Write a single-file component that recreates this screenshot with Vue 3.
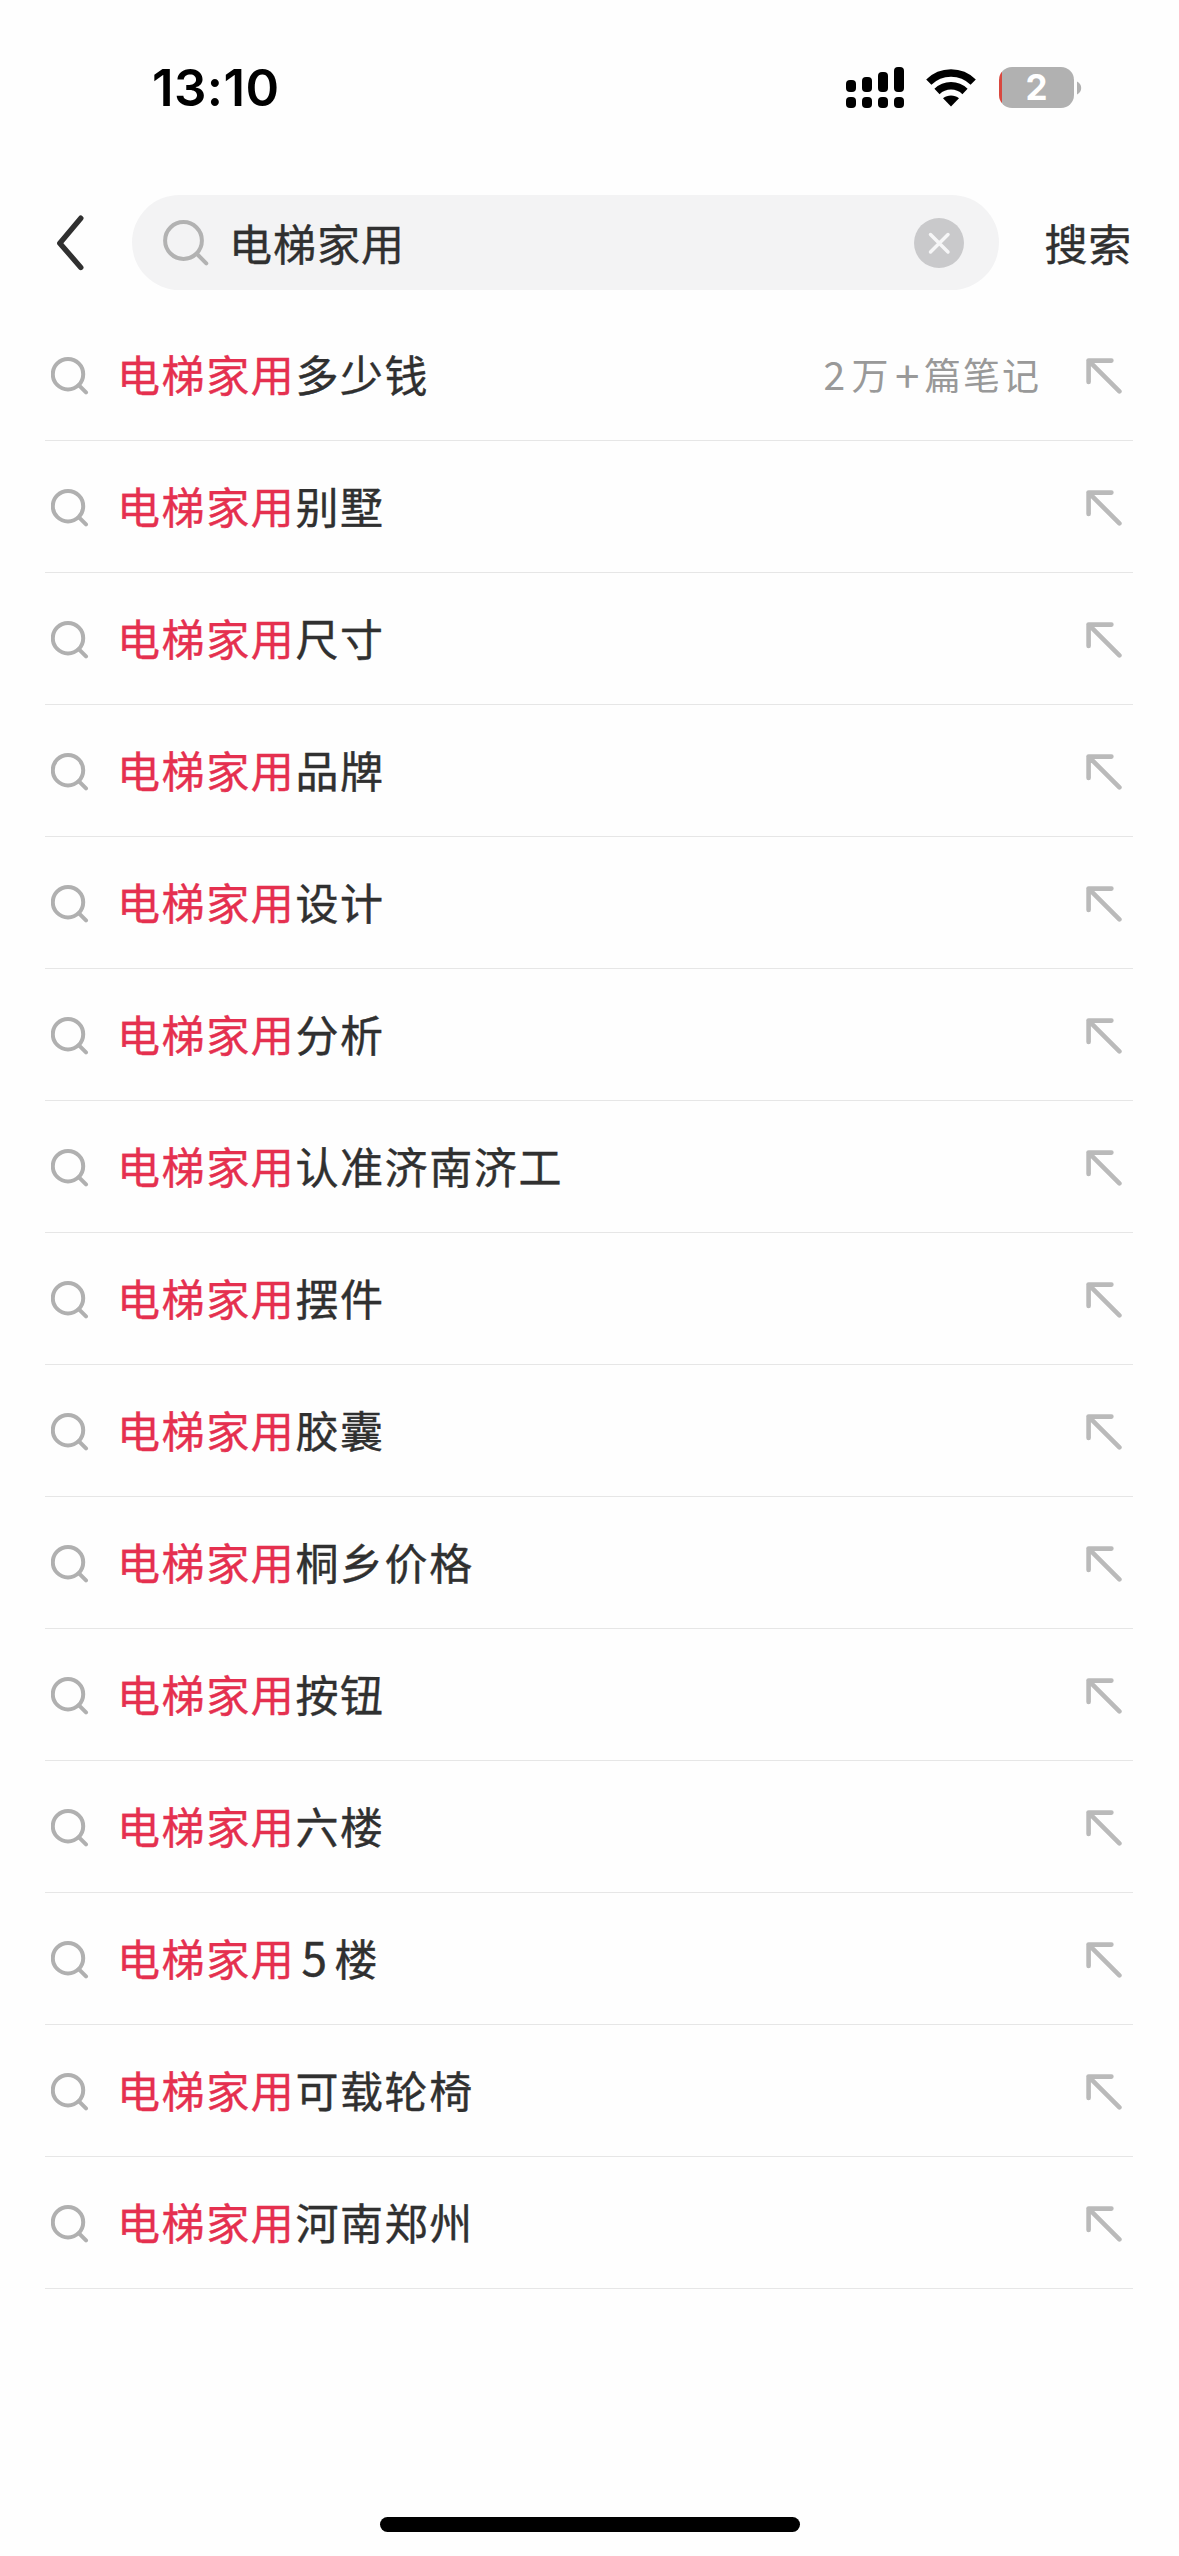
<script setup>
const keyword = '电梯家用'
const items = [
  { tail: '多少钱', counted: true },
  { tail: '别墅' },
  { tail: '尺寸' },
  { tail: '品牌' },
  { tail: '设计' },
  { tail: '分析' },
  { tail: '认准济南济工' },
  { tail: '摆件' },
  { tail: '胶囊' },
  { tail: '桐乡价格' },
  { tail: '按钮' },
  { tail: '六楼' },
  { digit: '5', tail: '楼' },
  { tail: '可载轮椅' },
  { tail: '河南郑州' },
]
</script>

<template>
  <div class="screen">
    <header class="status">
      <span class="time">13:10</span>
      <div class="indicators">
        <svg class="signal" width="58" height="41" viewBox="0 0 58 41">
          <rect x="0" y="13" width="10" height="12" rx="4" />
          <rect x="16" y="10" width="10" height="15" rx="4" />
          <rect x="32" y="5" width="10" height="20" rx="4" />
          <rect x="48" y="0" width="10" height="25" rx="4" />
          <rect v-for="x in [0, 16, 32, 48]" :key="x" :x="x" y="30" width="10" height="11" rx="4" />
        </svg>
        <svg class="wifi" width="50" height="38" viewBox="0 0 50 38">
          <path d="M2.8 13.2A31.5 31.5 0 0 1 47.2 13.2" />
          <path d="M11 22.5A20 20 0 0 1 39 22.5" />
          <path class="dot" d="M25 37.5L17 29.3C21.5 25.6 28.5 25.6 33 29.3Z" />
        </svg>
        <div class="battery"><span class="level">2</span></div>
        <svg class="cap" width="5" height="14" viewBox="0 0 5 14">
          <path d="M0 0.5C5.6 3 5.6 11 0 13.5Z" />
        </svg>
      </div>
    </header>

    <div class="search">
      <svg class="back" width="28" height="56" viewBox="0 0 28 56">
        <path d="M24.8 3.2L3.8 28.2L24.8 52.4" />
      </svg>
      <div class="field">
        <svg class="glass" width="46" height="46" viewBox="0 0 46 46">
          <circle cx="20.5" cy="20.5" r="18.4" />
          <path d="M34 34L43.3 43.3" />
        </svg>
        <span class="query">{{ keyword }}</span>
        <svg class="clear" width="50" height="50" viewBox="0 0 50 50">
          <circle cx="25" cy="25" r="25" />
          <path d="M16.5 16.5L34 34M34 16.5L16.5 34" />
        </svg>
      </div>
      <span class="submit">搜索</span>
    </div>

    <ul class="list">
      <li v-for="item in items" :key="item.tail" class="row">
        <svg class="lens" width="38" height="38" viewBox="0 0 38 38">
          <circle cx="17" cy="17.2" r="15.2" />
          <path d="M28 28.4L35 35.4" />
        </svg>
        <span class="label"><em>{{ keyword }}</em><span v-if="item.digit" class="digit">{{ item.digit }}</span>{{ item.tail }}</span>
        <span v-if="item.counted" class="count"><span class="num">2</span>万<span class="plus">+</span>篇笔记</span>
        <svg class="arrow" width="36" height="36" viewBox="0 0 36 36">
          <path d="M25.4 2.6H2.6V24M2.6 2.6L33.4 33.4" />
        </svg>
      </li>
    </ul>

    <footer class="home"><i></i></footer>
  </div>
</template>

<style>
body {
  margin: 0;
  background: #fefefe;
}
</style>

<style scoped>
.screen {
  box-sizing: border-box;
  display: flex;
  flex-direction: column;
  width: 1179px;
  height: 2556px;
  overflow: hidden;
  background: #fefefe;
  color: #303030;
  font-family: "Noto Sans CJK SC", sans-serif;
}
svg {
  display: block;
  flex: none;
  fill: none;
  stroke-linecap: round;
}
.status {
  box-sizing: border-box;
  display: flex;
  justify-content: space-between;
  align-items: center;
  height: 176px;
  padding: 0 97px 0 152px;
}
.time {
  color: #000;
  font: 600 51px/60px Inter, sans-serif;
  letter-spacing: 0.4px;
}
.indicators {
  display: flex;
  align-items: center;
  height: 41px;
  margin-bottom: 1px;
}
.signal {
  fill: #000;
}
.wifi {
  margin-left: 22px;
  stroke: #000;
  stroke-width: 7.4;
  stroke-linecap: butt;
}
.wifi .dot {
  fill: #000;
  stroke: none;
}
.battery {
  display: flex;
  align-items: center;
  justify-content: center;
  width: 75px;
  height: 41px;
  margin-left: 23px;
  border-radius: 13px;
  background: linear-gradient(90deg, #d9483f 3px, #b1b1b1 3px);
}
.level {
  color: #fff;
  font: 700 35px/41px Inter, sans-serif;
}
.cap {
  margin-left: 3px;
  fill: #b1b1b1;
}
.search {
  box-sizing: border-box;
  display: flex;
  align-items: center;
  height: 133px;
  padding: 0 47px 0 56px;
}
.search .back {
  stroke: #303030;
  stroke-width: 5.4;
  stroke-linejoin: round;
}
.field {
  box-sizing: border-box;
  display: flex;
  align-items: center;
  width: 867px;
  height: 95px;
  margin-left: 48px;
  padding: 0 35px 0 31px;
  border-radius: 48px;
  background: #f3f3f4;
}
.glass {
  stroke: #b2b2b2;
  stroke-width: 4;
}
.query {
  flex: 1;
  margin-left: 20px;
  padding-bottom: 2px;
  font-size: 43px;
  line-height: 60px;
  letter-spacing: 1px;
}
.query,
.submit,
.label {
  -webkit-text-stroke: 0.4px currentColor;
}
.clear {
  fill: #c9c9cb;
  stroke: #f6f6f7;
  stroke-width: 3.5;
}
.clear circle {
  stroke: none;
}
.submit {
  margin-left: auto;
  padding-bottom: 2px;
  font-size: 43px;
  line-height: 60px;
  letter-spacing: 0.8px;
}
.list {
  margin: 0;
  padding: 0 46px 0 45px;
  list-style: none;
}
.row {
  box-sizing: border-box;
  display: flex;
  align-items: center;
  height: 132px;
  padding: 2px 11px 0 6px;
  border-bottom: 1px solid #e6e6e6;
}
.lens {
  stroke: #b0b0b0;
  stroke-width: 4;
}
.label {
  flex: 1;
  margin-left: 28px;
  padding-bottom: 5px;
  font-size: 43px;
  line-height: 60px;
  letter-spacing: 1.6px;
  white-space: nowrap;
}
.label em {
  color: #e5304f;
  font-style: normal;
}
.digit {
  margin: 0 6px 0 6px;
  font-size: 46px;
  line-height: 1;
}
.count {
  margin-right: 45px;
  padding-bottom: 4px;
  color: #999;
  font-size: 37px;
  line-height: 54px;
  letter-spacing: 2px;
  white-space: nowrap;
}
.num,
.plus {
  display: inline-block;
  line-height: 1;
  letter-spacing: 0;
}
.num {
  width: 28px;
  font-size: 39px;
}
.plus {
  position: relative;
  top: 3px;
  width: 33.5px;
  font-size: 44px;
  text-align: center;
}
.arrow {
  margin-top: 1px;
  stroke: #bababa;
  stroke-width: 4.6;
  stroke-linejoin: round;
}
.home {
  display: flex;
  justify-content: center;
  margin-top: auto;
  padding-bottom: 24px;
}
.home i {
  width: 420px;
  height: 15px;
  border-radius: 8px;
  background: #000;
}
</style>
